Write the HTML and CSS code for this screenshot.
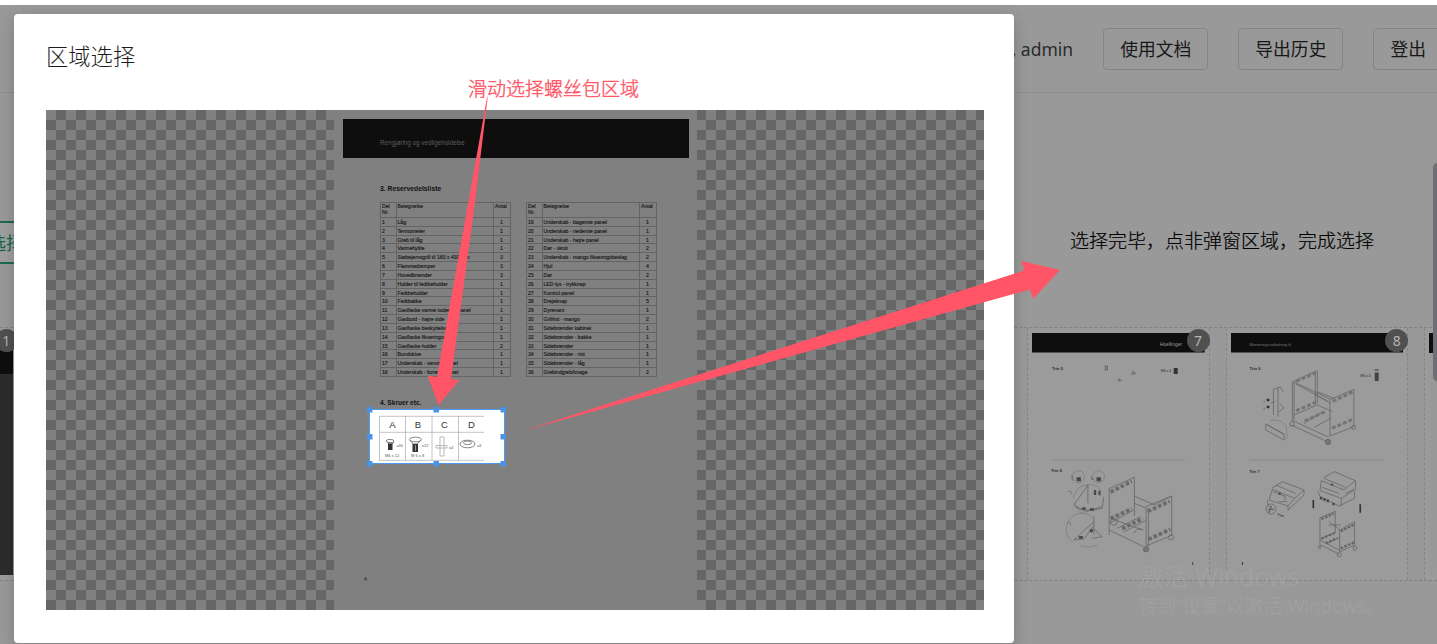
FILE: index.html
```html
<!DOCTYPE html>
<html lang="zh-CN">
<head>
<meta charset="utf-8">
<title>区域选择</title>
<link rel="stylesheet" href="styles.css">
</head>
<body>
<div class="page">
  <header class="header">
    <span class="user">, admin</span>
    <button class="btn">使用文档</button>
    <button class="btn">导出历史</button>
    <button class="btn">登出</button>
  </header>
  <section class="tools">
    <button class="pick">选择</button>
    <p class="note">选择完毕，点非弹窗区域，完成选择</p>
  </section>
  <section class="strip">
    <div class="card"><div class="cover"></div><span class="badge">1</span></div>
    <div class="card"></div><div class="card"></div><div class="card"></div><div class="card"></div><div class="card"></div>
    <div class="card">
      <svg class="sheet" viewBox="1032 333 173 242" preserveAspectRatio="none">
        <rect x="1032" y="333" width="173" height="19.5" fill="#0e0e0e"/>
        <text x="1160" y="346.500" font-size="5" fill="#999">Hoellinger</text>
        <g font-size="4.200" fill="#2b2b2b"><text x="1052" y="370" font-weight="bold">Trin 5</text><text x="1051" y="472.500" font-weight="bold">Trin 6</text><text x="1161" y="372" font-size="3.500">M6 x 4</text></g>
        <g fill="none" stroke="#555" stroke-width=".8"><path d="M1105.500 366v4h2v-4zM1119 378v3l3-1M1132 372h3v2h-4"/><path d="M1051 460H1185" stroke="#858585"/></g>
        <path d="M1174 368h4v6h-4z" fill="#333"/>
        <g class="art" transform="translate(1014 450) scale(.3333)">
          <path d="M286 116L362 82V198M286 116V255M360 138L422 165L474 138M397 170L474 138V256L397 288V170M404 174V290M286 220L360 180M290 205L388 240M286 240L390 290M310 235L380 200M330 246L395 212M360 250q10-20 28-10M362 160L396 174"/>
          <path d="M290 126l64-32M290 205l64-28M402 184l66-30M404 268l66-30M325 236l62-30" stroke-width="11" stroke-dasharray="11 6" stroke="#6a6a6a"/>
          <circle cx="397" cy="298" r="8" fill="#777"/><circle cx="472" cy="262" r="8"/><circle cx="300" cy="216" r="10"/>
          <path d="M180 165L222 105V160M180 165q30 25 85 10l5-35M183 170l35 15 45-15M240 198v55M180 270l60-55M180 270l30-3 25-35 30 28-30 5"/>
          <path d="M178 145A48 48 0 0 1 262 120M215 192A48 48 0 0 1 180 155M175 275A48 48 0 0 1 235 200M200 287q25 10 50-3" stroke="#7c7c7c"/>
          <circle cx="194" cy="80" r="18" stroke="#7c7c7c"/><circle cx="254" cy="80" r="18" stroke="#7c7c7c"/>
          <path d="M188 82h13v12h-13zM248 82h13v12h-13zM240 120h7v15h-7zM254 122h6v14h-6zM195 258h12v8h-12zM228 238h9v9h-9zM205 172h10v7h-10zM228 175h12v7h-12z" fill="#484848" stroke="none"/>
          <path d="M171 80l4-3v15M233 78v10h8"/>
          <path d="M162 124h10v10M160 218h10v10" stroke="#777"/>
        </g>
        <path d="M1193 562v3" stroke="#444"/>
      </svg>
      <span class="badge">7</span>
    </div>
    <div class="card">
      <svg class="sheet" viewBox="1230.500 333 173 242" preserveAspectRatio="none">
        <rect x="1230" y="333" width="175" height="19.500" fill="#0e0e0e"/>
        <text x="1249" y="346.500" font-size="4" fill="#777">Monteringsvejledning til</text>
        <g font-size="4.200" fill="#2b2b2b"><text x="1249" y="370" font-weight="bold">Trin 6</text><text x="1249" y="473" font-weight="bold" font-size="3.800">Trin 7</text><text x="1360" y="377" font-size="3.500">M6 x 4</text></g>
        <path d="M1249 460H1383" stroke="#858585" stroke-width=".8"/>
        <path d="M1374.500 372.500h4v8.500h-4z" fill="#444"/><path d="M1374.500 370h4" stroke="#555" stroke-width="1.500"/>
        <g class="art" transform="translate(1217 320) scale(.3333)">
          <path d="M230 183L300 152V250M230 183V300M225 185V300M294 155V250M230 186L340 238L410 208V320L338 348V238M235 192L330 242M300 215L350 235M222 300L335 352M230 285L300 255L345 275M260 310l55-35M290 322l52-28M222 315L330 365M290 222L340 250"/>
          <path d="M236 184l58-25M236 272l60-25M346 244l60-28M344 325l60-26M262 303l62-28" stroke-width="9" stroke-dasharray="12 6" stroke="#747474"/>
          <circle cx="224" cy="312" r="7"/><circle cx="332" cy="366" r="8" fill="#777"/><circle cx="409" cy="322" r="6"/>
          <path d="M168 208V285M182 205V290M168 208l20-7 10 15M188 250l12 14-16 12M145 312l55 30v18l-55-30zM150 315l48 27"/>
          <path d="M158 302q30-8 48 15l4 35-10 10" stroke="#7c7c7c"/>
          <path d="M148 236h8v8h-8zM148 257h8v8h-8z" fill="#333" stroke="none"/><path d="M140 242v6M140 263v6M160 250l14-6"/>
        </g>
        <g class="art" transform="translate(1217 450) scale(.3333)">
          <path d="M163 115L195 95L260 120L232 145L165 118L155 150L212 168L232 145M260 120V135L212 180V168M175 105L235 130M150 150q0 20 10 22M168 125l35 14v12M185 155h25"/>
          <circle cx="161" cy="177" r="15"/><path d="M153 178h17M162 168l-8 20M180 192l15 6M190 198h10" stroke-width="4"/><circle cx="187" cy="131" r="3" fill="#333"/>
          <path d="M320 82L352 65L414 92L380 120L312 92L308 122L372 145L415 118V92M303 125L308 140L365 168L412 145V125M372 145V168M385 130l25-12M320 85L385 112M315 112l50 18"/>
          <path d="M308 143l30 12M345 162h10" stroke-width="8" stroke-dasharray="7 4" stroke="#444"/><circle cx="344" cy="104" r="3" fill="#333"/>
          <path d="M288 150v25M429 163v25" stroke="#333" stroke-width="5"/>
          <path d="M308 203L354 184V250M308 203V290M335 215L368 240L412 215V285L367 305V240M308 270L365 300M310 285L365 312M330 280L370 262M312 265L352 248M335 225h35"/>
          <path d="M312 207l38-16M312 266l40-17M370 244l40-20M370 295l40-18M325 280l35-16" stroke-width="7" stroke-dasharray="8 4" stroke="#666"/>
          <circle cx="366" cy="314" r="6"/><circle cx="413" cy="295" r="6"/><circle cx="307" cy="292" r="4"/>
        </g>
        <path d="M1242 562v3" stroke="#333"/>
      </svg>
      <span class="badge">8</span>
    </div>
    <div class="card"><div class="cover"></div></div>
  </section>
</div>
<div class="scrollbar"></div>
<div class="watermark"><p>激活 Windows</p><p>转到“设置”以激活 Windows。</p></div>

<div class="modal">
  <h1>区域选择</h1>
  <div class="cropper">
    <div class="paper">
      <div class="banner">Rengjøring og vedligeholdelse</div>
      <h2>3. Reservedelsliste</h2>
      <div class="tables">
        <table>
          <tr class="head"><th>Del<br>Nr.</th><th>Betegnelse</th><th>Antal</th></tr>
          <tr><td>1</td><td>Låg</td><td>1</td></tr>
          <tr><td>2</td><td>Termometer</td><td>1</td></tr>
          <tr><td>3</td><td>Greb til låg</td><td>1</td></tr>
          <tr><td>4</td><td>Varmehylde</td><td>1</td></tr>
          <tr><td>5</td><td>Støbejernsgrill til 180 x 430 mm</td><td>3</td></tr>
          <tr><td>6</td><td>Flammedæmper</td><td>3</td></tr>
          <tr><td>7</td><td>Hovedbrænder</td><td>3</td></tr>
          <tr><td>8</td><td>Holder til fedtbeholder</td><td>1</td></tr>
          <tr><td>9</td><td>Fedtbeholder</td><td>1</td></tr>
          <tr><td>10</td><td>Fedtbakke</td><td>1</td></tr>
          <tr><td>11</td><td>Gasflaske varme isolering panel</td><td>1</td></tr>
          <tr><td>12</td><td>Gasbord - højre side</td><td>1</td></tr>
          <tr><td>13</td><td>Gasflaske beskyttelse</td><td>1</td></tr>
          <tr><td>14</td><td>Gasflaske fikseringsring</td><td>1</td></tr>
          <tr><td>15</td><td>Gasflaske-holder</td><td>2</td></tr>
          <tr><td>16</td><td>Bundskive</td><td>1</td></tr>
          <tr><td>17</td><td>Underskab - venstre panel</td><td>1</td></tr>
          <tr><td>18</td><td>Underskab - forreste panel</td><td>1</td></tr>
        </table>
        <table>
          <tr class="head"><th>Del<br>Nr.</th><th>Betegnelse</th><th>Antal</th></tr>
          <tr><td>19</td><td>Underskab - bagerste panel</td><td>1</td></tr>
          <tr><td>20</td><td>Underskab - nederste panel</td><td>1</td></tr>
          <tr><td>21</td><td>Underskab - højre panel</td><td>1</td></tr>
          <tr><td>22</td><td>Dør - skrot</td><td>2</td></tr>
          <tr><td>23</td><td>Underskab - mango fikseringsbeslag</td><td>2</td></tr>
          <tr><td>24</td><td>Hjul</td><td>4</td></tr>
          <tr><td>25</td><td>Dør</td><td>2</td></tr>
          <tr><td>26</td><td>LED-lys - trykknap</td><td>1</td></tr>
          <tr><td>27</td><td>Kontrol-panel</td><td>1</td></tr>
          <tr><td>28</td><td>Drejeknap</td><td>5</td></tr>
          <tr><td>29</td><td>Dyrevant</td><td>1</td></tr>
          <tr><td>30</td><td>Grillrist - mango</td><td>2</td></tr>
          <tr><td>31</td><td>Sidebrænder kabinet</td><td>1</td></tr>
          <tr><td>32</td><td>Sidebrænder - bakke</td><td>1</td></tr>
          <tr><td>33</td><td>Sidebrænder</td><td>1</td></tr>
          <tr><td>34</td><td>Sidebrænder - rist</td><td>1</td></tr>
          <tr><td>35</td><td>Sidebrænder - låg</td><td>1</td></tr>
          <tr><td>36</td><td>Grebindgreb/knage</td><td>2</td></tr>
        </table>
      </div>
      <h2 class="screws">4. Skruer etc.</h2>
      <div class="selection">
        <svg viewBox="350 370 200 110" width="200" height="110">
          <rect x="369.500" y="409.500" width="135" height="54" fill="#fff" stroke="#4c9bef"/>
          <g stroke="#b5b5b5" stroke-width=".8"><path d="M379.500 416V460.500M405.500 416V460.500M432 416V460.500M458.500 416V460.500M379 416.300H484M379 432.300H484M379 460.300H484"/></g>
          <g font-size="9.500" fill="#333" text-anchor="middle"><text x="392.500" y="428">A</text><text x="418" y="428">B</text><text x="444.500" y="428">C</text><text x="471.500" y="428">D</text></g>
          <g font-size="4" fill="#555"><text x="396.500" y="446.500">x40</text><text x="422" y="446.500">x12</text><text x="449" y="448.500">x4</text><text x="477" y="446.500">x4</text><text x="385" y="456.500">M6 x 12</text><text x="411" y="456.500">M 6 x 8</text></g>
          <g fill="none" stroke="#666" stroke-width=".8"><ellipse cx="390" cy="441" rx="4" ry="1.600"/><path d="M387 442l2 2h3l2-2M410 440l3 4h4l4-4"/><ellipse cx="415.500" cy="439.500" rx="6" ry="2.300"/><path d="M440 437h4v19h-4zM436 445.500h11v2.500h-11z" stroke="#aaa"/><ellipse cx="467.500" cy="444" rx="7.500" ry="3.800"/><ellipse cx="467.500" cy="442.800" rx="4" ry="1.800"/></g>
          <path d="M388 443.500h4.500v6.500H388zM412.500 444h5.500v8h-5.500z" fill="#333"/><path d="M415.500 445v6" stroke="#999"/>
          <path fill="#4a94e8" d="M367 407h5.500v5.500h-5.500zM433.500 407h5.500v5.500h-5.500zM500.500 407h5.500v5.500h-5.500zM367 434h5.500v5.500h-5.500zM500.500 434h5.500v5.500h-5.500zM367 461h5.500v5.500h-5.500zM433.500 461h5.500v5.500h-5.500zM500.500 461h5.500v5.500h-5.500z"/>
        </svg>
      </div>
      <span class="pageno">4</span>
    </div>
  </div>
</div>

<svg class="annotations" viewBox="0 0 1437 644">
  <g fill="#ff5566">
    <path d="M488 95L474 210L451 379L459.500 380L438.500 405L427.500 375.500L437 377L467 210L486.500 100Z"/>
    <path d="M521 431.500L1024 270.500L1021.500 261L1060 270L1033 299L1030 289.500Z"/>
    <text class="hint" x="468" y="95.500" font-size="19">滑动选择螺丝包区域</text>
  </g>
</svg>
</body>
</html>
```
FILE: styles.css
```css
* { box-sizing: border-box; }
body {
  margin: 0;
  width: 1437px;
  height: 644px;
  overflow: hidden;
  position: relative;
  background: #999;
  color: #1c1c1c;
  font-family: "Noto Sans", "Noto Sans CJK SC", sans-serif;
}
p, h1, h2 { margin: 0; font-weight: 300; }
.page {
  height: 644px;
  overflow: hidden;
  border-top: 5px solid #fff;
}
.header {
  height: 88px;
  display: flex;
  justify-content: flex-end;
  align-items: center;
  gap: 30px;
  margin-right: -6px;
  border-bottom: 1px solid #8d8d8d;
}
.user { font-size: 17.500px; color: #2b2b2b; }
.btn {
  height: 42px;
  padding: 0 16px;
  border: 1px solid #848484;
  border-radius: 4px;
  background: none;
  color: #181818;
  font: 17.800px "Noto Sans", "Noto Sans CJK SC", sans-serif;
  line-height: 38px;
}
.tools {
  height: 234px;
  display: flex;
  justify-content: space-between;
  align-items: flex-start;
  padding: 128px 63px 0 0;
}
.pick {
  width: 120px;
  height: 43px;
  margin-left: -72px;
  border: 2px solid #1c6950;
  background: #9f9f9f;
  color: #126548;
  font: 18px "Noto Sans CJK SC", sans-serif;
  padding: 0 22px 2px 0;
  text-align: right;
}
.note { font: 300 19px/37px "Noto Sans CJK SC", sans-serif; color: #000; -webkit-text-stroke: .2px #000; }
.strip {
  width: 1772px;
  height: 254px;
  margin-left: -165px;
  display: flex;
  gap: 16px;
  border-top: 1px dashed #828282;
  border-bottom: 1px dashed #808080;
}
.card {
  position: relative;
  flex: none;
  width: 182.670px;
  padding: 5px 4px 4px;
  border: 1px dashed #858585;
  border-width: 0 1px;
  background: #9b9b9b;
}
.sheet {
  display: block;
  width: 100%;
  height: 242px;
  font-family: "Liberation Sans", sans-serif;
}
.art { fill: none; stroke: #636363; stroke-width: 2.3px; }
.art [stroke-width="11"] { stroke-width: 11px; }
.cover { height: 242px; background: linear-gradient(#0e0e0e 41px, #2c2c2c 41px); }
.card:last-child .cover { background: linear-gradient(#0e0e0e 20px, #999 20px); }
.badge {
  position: absolute;
  top: 1px;
  right: -1px;
  width: 23px;
  height: 23px;
  border-radius: 50%;
  background: #505050;
  color: #b5b5b5;
  font-size: 14px;
  line-height: 23px;
  text-align: center;
}
.scrollbar {
  position: absolute;
  right: -5px;
  top: 163px;
  width: 9px;
  height: 218px;
  border-radius: 5px;
  background: #6d6f73;
}
.watermark {
  position: absolute;
  left: 1138px;
  top: 561px;
  color: #a2a2a2;
  font-size: 19px;
  line-height: 29px;
  white-space: nowrap;
}
.watermark p:first-child { font-size: 25.300px; line-height: 31px; }
.modal {
  position: absolute;
  left: 14px;
  top: 14px;
  width: 1000px;
  height: 629px;
  padding: 0 30px 0 32px;
  border-radius: 4px;
  background: #fff;
  box-shadow: 0 4px 15px rgba(0, 0, 0, .2);
}
.modal h1 {
  height: 96px;
  font: 300 22.300px/83px "Noto Sans CJK SC", sans-serif;
}
.cropper {
  width: 938px;
  height: 500px;
  display: flex;
  padding-left: 288px;
  background: conic-gradient(#666 25%, #808080 0 50%, #666 0 75%, #808080 0) 0 0 / 20px 20px;
}
.paper {
  position: relative;
  width: 363px;
  height: 500px;
  padding: 9px 8px 0 9px;
  background: #808080;
  color: #1a1a1a;
  font-family: "Liberation Sans", sans-serif;
}
.banner {
  height: 39px;
  padding-left: 37px;
  background: #0e0e0e;
  color: #5c5c5c;
  font-size: 6.300px;
  line-height: 47px;
}
.paper h2 {
  margin: 26px 0 0 37px;
  font-size: 6.800px;
  line-height: 10px;
  font-weight: 700;
  color: #111;
}
.tables { display: flex; gap: 15px; margin: 8px 0 0 37px; }
table {
  width: 131px;
  border-collapse: collapse;
  table-layout: fixed;
  font-size: 5.150px;
  line-height: 6px;
  -webkit-text-stroke: .15px #1a1a1a;
}
tr { height: 8.830px; }
.head { height: 15px; }
th, td {
  padding: 0 0 0 1px;
  border: 1px solid #646464;
  font-weight: 400;
  text-align: left;
  vertical-align: middle;
  white-space: nowrap;
}
th { vertical-align: top; }
th:first-child { width: 15.500px; }
th:last-child { width: 17px; }
td:last-child { padding-left: 6px; }
.paper .screws { margin-top: 21px; font-size: 6.600px; }
.selection { position: absolute; left: 16px; top: 260px; }
.selection svg { display: block; }
.pageno { position: absolute; left: 30px; bottom: 28px; font-size: 5px; line-height: 6px; }
.annotations {
  position: absolute;
  left: 0;
  top: 0;
  width: 1437px;
  height: 644px;
  font-family: "Noto Sans CJK SC", sans-serif;
  font-weight: 300;
}
.hint { stroke: #ff5566; stroke-width: .4px; }
```
